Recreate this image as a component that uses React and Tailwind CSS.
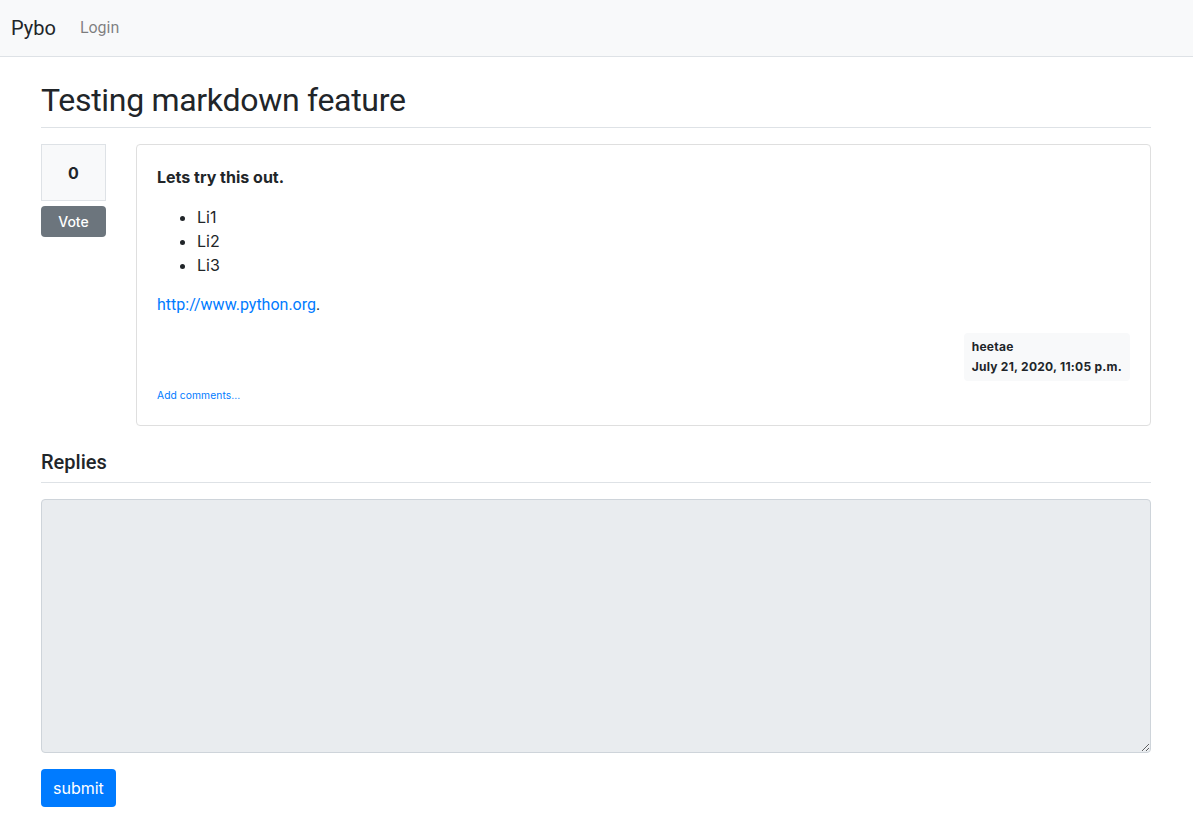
export default function App() {
  const inter = { fontFamily: 'Inter, "Noto Sans", sans-serif' }
  const roboto = { fontFamily: 'Roboto, "Noto Sans", sans-serif' }

  return (
    <div className="min-h-screen bg-white text-[#212529] text-base leading-6" style={inter}>
      {/* navbar */}
      <nav className="h-[57px] bg-[#f8f9fa] border-b border-[#dee2e6] flex items-center pl-[11px]" style={roboto}>
        <a className="text-xl leading-[30px] text-[#212529] mr-4">Pybo</a>
        <a className="px-2 text-base text-[#00000080]">Login</a>
      </nav>

      <div className="w-[1110px] ml-[41px]">
        <h2
          className="text-[32px] leading-[38px] font-normal tracking-[-0.3px] border-b border-[#dee2e6] mt-4 mb-4 pt-2 pb-2"
          style={roboto}
        >
          Testing markdown feature
        </h2>

        <div className="flex gap-[30px]">
          {/* vote */}
          <div className="w-[65px] shrink-0">
            <div className="bg-[#f8f9fa] border border-[#dee2e6] text-center font-bold h-[57px] flex items-center justify-center">
              0
            </div>
            <button className="mt-[5px] w-full h-[31px] rounded bg-[#6c757d] text-white text-sm font-medium">Vote</button>
          </div>

          {/* question card */}
          <div className="flex-1 border border-[#dfdfdf] rounded p-5">
            <p className="font-bold mb-4">Lets try this out.</p>
            <ul className="list-disc pl-10 mb-4">
              <li>Li1</li>
              <li>Li2</li>
              <li>Li3</li>
            </ul>
            <p className="mb-4 h-6" style={roboto}>
              <a className="text-[#007bff]">http://www.python.org</a>.
            </p>
            <div className="flex justify-end">
              <div className="bg-[#f8f9fa] rounded p-2 text-xs leading-3 font-bold tracking-[0.25px]">
                <div className="mb-2">heetae</div>
                <div>July 21, 2020, 11:05 p.m.</div>
              </div>
            </div>
            <div className="h-6 flex items-end pb-[2px]">
              <a className="text-[10.24px] leading-[16px] text-[#007bff] tracking-[0.1px]">Add comments...</a>
            </div>
          </div>
        </div>

        <h5 className="text-xl leading-6 font-medium border-b border-[#dee2e6] mt-4 mb-4 pt-2 pb-2" style={roboto}>
          Replies
        </h5>

        <div className="mb-4">
          <textarea
            disabled
            rows={10}
            className="block w-full h-[254px] bg-[#e9ecef] border border-[#ced4da] rounded px-3 py-[6px]"
          />
        </div>
        <button className="h-[38px] px-3 rounded bg-[#007bff] text-white text-base">submit</button>
      </div>
    </div>
  )
}
